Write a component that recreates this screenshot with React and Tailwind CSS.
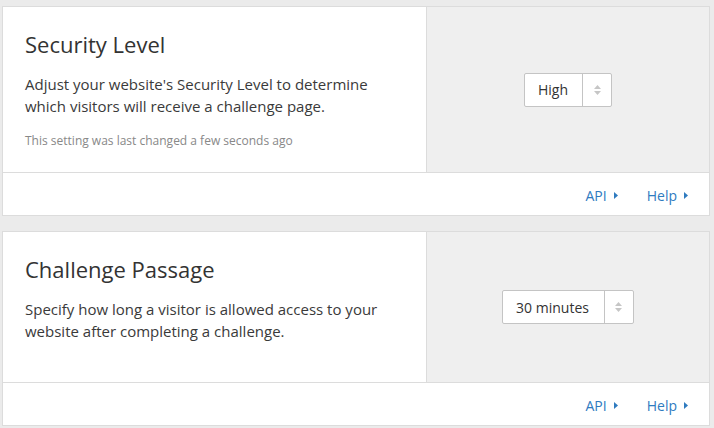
import React from "react";

function Arrows() {
  return (
    <svg width="7" height="10" viewBox="0 0 7 10" className="block">
      <path d="M3.5 0 L7 4 L0 4 Z" fill="#c6c6c6" />
      <path d="M0 6 L7 6 L3.5 10 Z" fill="#c6c6c6" />
    </svg>
  );
}

function Caret() {
  return (
    <svg width="4" height="7" viewBox="0 0 4 7" className="block ml-[7px] mt-[1px]">
      <path d="M0 0 L4 3.5 L0 7 Z" fill="#2f7bbf" />
    </svg>
  );
}

function Select({ value, textPad }) {
  return (
    <div className="flex h-[34px] bg-white border border-[#c4c4c4] rounded-[2px]">
      <div className={`flex items-center pl-[13px] ${textPad} text-[14px] text-[#333]`}>{value}</div>
      <div className="w-[29px] border-l border-[#c4c4c4] flex items-center justify-center">
        <Arrows />
      </div>
    </div>
  );
}

function Card({ title, lines, note, value, textPad, minH }) {
  return (
    <div className="bg-white border border-[#dcdcdc]">
      <div className={`flex ${minH}`}>
        <div className="w-[424px] border-r border-[#dcdcdc] p-[22px]">
          <h2 className="text-[22px] leading-[30px] text-[#333] font-normal">{title}</h2>
          <p className="mt-[14px] text-[15px] leading-[22px] text-[#3a3a3a]">
            {lines[0]}
            <br />
            {lines[1]}
          </p>
          {note && (
            <p className="mt-[15px] text-[12px] leading-[18px] text-[#888]">{note}</p>
          )}
        </div>
        <div className="flex-1 bg-[#efefef] flex items-center justify-center">
          <Select value={value} textPad={textPad} />
        </div>
      </div>
      <div className="h-[43px] border-t border-[#dcdcdc] flex items-center justify-end pr-[21px] pt-[2px] gap-[29px] text-[14px] text-[#2f7bbf]">
        <span className="flex items-center">API<Caret /></span>
        <span className="flex items-center">Help<Caret /></span>
      </div>
    </div>
  );
}

export default function App() {
  return (
    <div
      className="w-[714px] h-[428px] bg-[#ebebeb] pt-[6px] pl-[2px] pr-[4px] flex flex-col gap-[15px] overflow-hidden"
      style={{ fontFamily: '"Open Sans", "Noto Sans", sans-serif' }}
    >
      <Card
        title="Security Level"
        lines={[
          "Adjust your website's Security Level to determine",
          "which visitors will receive a challenge page.",
        ]}
        note="This setting was last changed a few seconds ago"
        value="High"
        textPad="pr-[14px]"
        minH="min-h-[165px]"
      />
      <Card
        title="Challenge Passage"
        lines={[
          "Specify how long a visitor is allowed access to your",
          "website after completing a challenge.",
        ]}
        value="30 minutes"
        textPad="pr-[15px]"
        minH="min-h-[150px]"
      />
    </div>
  );
}
